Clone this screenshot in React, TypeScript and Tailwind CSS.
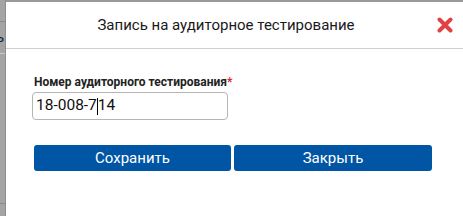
import React from "react";

export default function App() {
  return (
    <div className="flex h-[216px] w-[463px] overflow-hidden bg-white font-['Roboto',sans-serif]">
      <div className="relative w-[6px] shrink-0 border-r border-[#8f8f8f] bg-[#a4a4a4]">
        <div className="absolute left-0 top-[21px] h-px w-[5px] bg-[#8a8a8a]" />
        <div className="absolute left-[-4px] top-[29px] text-[15px] leading-[16px] text-[#10213a]">ь</div>
        <div className="absolute left-0 top-[53px] h-px w-[5px] bg-[#c9c9c9]" />
        <div className="absolute left-0 top-[203px] h-px w-[5px] bg-[#8a8a8a]" />
      </div>
      <div className="flex flex-1 flex-col border-t-2 border-[#9a9a9a]">
        <div className="relative flex h-[47px] items-center border-b border-[#cfcfcf]">
          <div className="w-full pr-[17px] pt-[1px] text-center text-[15px] text-[#1a1a1a]">
            Запись на аудиторное тестирование
          </div>
          <svg
            className="absolute right-[10px] top-[15px]"
            width="16"
            height="16"
            viewBox="0 0 16 16"
          >
            <path d="M2.5 2.5 L13.5 13.5 M13.5 2.5 L2.5 13.5" stroke="#e04343" strokeWidth="4" strokeLinecap="round" />
          </svg>
        </div>
        <div className="flex flex-col pl-[26px] pt-[25px]">
          <div className="pl-[2px] text-[12px] font-bold leading-[16px] text-[#222]">
            Номер аудиторного тестирования<span className="text-[#e02020]">*</span>
          </div>
          <div className="mt-[2px] flex h-[28px] w-[196px] items-center rounded-[4px] border border-[#b5b5b5] pl-[3px] text-[15.5px] text-[#111]">
            <span>18-008-7</span>
            <span className="inline-block h-[17px] w-px bg-black" />
            <span>14</span>
          </div>
          <div className="mt-[25px] flex gap-[3px] pl-[2px]">
            <button className="h-[26px] w-[197px] rounded-[3px] bg-[#0055a5] text-[15px] text-white">
              Сохранить
            </button>
            <button className="h-[26px] w-[198px] rounded-[3px] bg-[#0055a5] text-[15px] text-white">
              Закрыть
            </button>
          </div>
        </div>
      </div>
    </div>
  );
}
